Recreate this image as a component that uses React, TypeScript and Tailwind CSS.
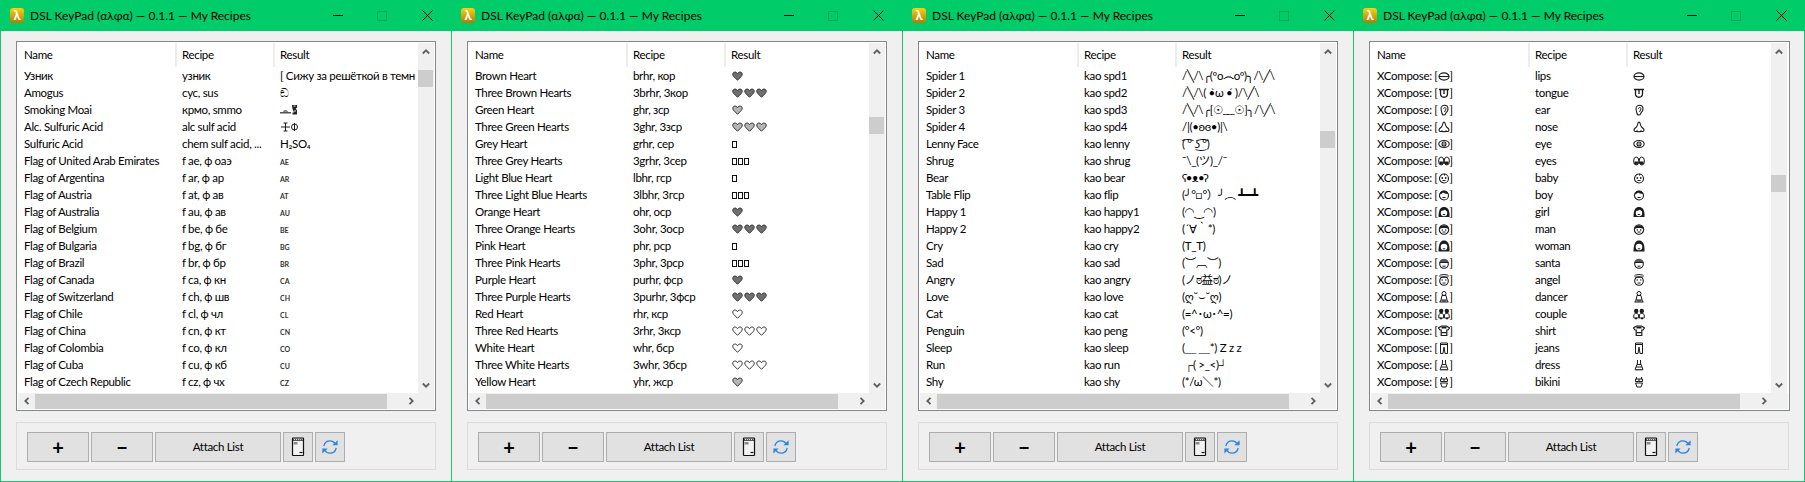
import React, { ReactNode } from "react";

const Svg = ({ w = 12, h = 12, children, className = "" }: { w?: number; h?: number; children: ReactNode; className?: string }) => (
  <svg width={w} height={h} viewBox={`0 0 ${w} ${h}`} className={`inline-block align-[-2px] shrink-0 ${className}`} fill="none">
    {children}
  </svg>
);

const HEART = "M5.500 10.300 1.500 6.200C.4 4.900.6 3 1.800 2.300 3.200 1.600 4.600 2.200 5.500 3.700 6.400 2.200 7.800 1.600 9.200 2.300 10.400 3 10.600 4.900 9.500 6.200Z";
const Heart = ({ fill }: { fill: string }) => (
  <Svg>
    <path d={HEART} fill={fill} stroke="#3a3a3a" strokeWidth="1" />
  </Svg>
);
const Hearts = ({ fill, n = 1 }: { fill: string; n?: number }) => (
  <span className="inline-flex h-[17px] items-center pl-px">
    {Array.from({ length: n }).map((_, i) => (
      <Heart key={i} fill={fill} />
    ))}
  </span>
);
const Tofu = ({ n = 1 }: { n?: number }) => (
  <span className="inline-flex h-[17px] items-center gap-[1px] pb-[2px] pl-px">
    {Array.from({ length: n }).map((_, i) => (
      <span key={i} className="block h-[7px] w-[5px] border border-[#111] bg-white" />
    ))}
  </span>
);
const Flag = ({ c }: { c: string }) => <span className="text-[7px] font-bold tracking-normal text-[#333]">{c}</span>;

const S = "#1c1c1c";
const emoji: Record<string, ReactNode> = {
  lips: (<><ellipse cx="6" cy="6.500" rx="5" ry="3.600" stroke={S} strokeWidth="1.100" /><path d="M1 6.500h10" stroke={S} strokeWidth="1.100" /></>),
  tongue: (<><path d="M1 2.500h10M2.500 2.500v4c0 5 7 5 7 0v-4M6 3v4" stroke={S} strokeWidth="1.300" /></>),
  ear: (<><path d="M3 5c0-5 7-5 7 0 0 3-2 3-2.500 5-.5 1.500-3 1.500-3.500-.5Z" stroke={S} strokeWidth="1.100" /><path d="M5.500 5c0-2 2.500-2 2.500 0l-1.500 3" stroke={S} /></>),
  nose: (<><path d="M6 1C4.500 1 5 4 3.500 6 2.500 7 1 7.500 1 9s2 2 3 1c1 1 3 1 4 0 1 1 3 .5 3-1S9.500 7 8.500 6C7 4 7.500 1 6 1Z" stroke={S} strokeWidth="1.100" /></>),
  eye: (<><ellipse cx="6" cy="6" rx="5.200" ry="3.500" stroke={S} strokeWidth="1.100" /><circle cx="6" cy="6" r="2" stroke={S} strokeWidth="1.100" /><circle cx="6" cy="6" r=".8" fill={S} /></>),
  eyes: (<><ellipse cx="3.200" cy="6" rx="2.600" ry="4" stroke={S} /><ellipse cx="8.800" cy="6" rx="2.600" ry="4" stroke={S} /><path d="M1.500 6.500h3.400v3H1.500zM7 6.500h3.500v3H7z" fill={S} /></>),
  baby: (<><circle cx="6" cy="6.500" r="4.500" stroke={S} strokeWidth="1.100" /><path d="M6 3.500c1 0 1-1.500 0-1.500" stroke={S} /><circle cx="4.300" cy="6" r=".9" fill={S} /><circle cx="7.700" cy="6" r=".9" fill={S} /><path d="M4.500 8.500h3" stroke={S} /></>),
  boy: (<><circle cx="6" cy="6.500" r="4.500" stroke={S} strokeWidth="1.100" /><path d="M1.500 5.500C2 1 9 .5 10.500 5 8 5.200 6 4 5 3.500 4.500 4.500 3 5 1.500 5.500Z" fill={S} /><path d="M4.500 8.500h3" stroke={S} /></>),
  girl: (<><path d="M.5 11C.500 3 3 1 6 1s6 2 5.500 10Z" fill={S} /><circle cx="6" cy="7" r="3.200" fill="#fff" /><path d="M3 5c2 0 3-1 3.500-2 1 1 2 2 3 2.500L9 3 5 2Z" fill={S} /><path d="M4.800 8.500h2.400" stroke={S} /></>),
  man: (<><circle cx="6" cy="6.500" r="4.700" stroke={S} strokeWidth="1.100" /><path d="M1.500 6C1.500 1 10.500 1 10.500 6 9 4.500 3 4.500 1.500 6Z" fill={S} /><circle cx="4.300" cy="7" r=".8" fill={S} /><circle cx="7.700" cy="7" r=".8" fill={S} /><path d="M4.500 9h3" stroke={S} /></>),
  woman: (<><path d="M.5 11.500C.500 3 3 .5 6 .5s6 2.500 5.500 11Z" fill={S} /><circle cx="6" cy="7" r="3.300" fill="#fff" /><path d="M4.800 8.800h2.400" stroke={S} /></>),
  santa: (<><circle cx="6" cy="7" r="4.300" stroke={S} strokeWidth="1.100" /><path d="M1.500 5.500C2 .5 9.500.5 10.500 5.500Z" fill="#555" /><path d="M1.500 5.500h9" stroke={S} /><path d="M4.500 9.200h3" stroke={S} /></>),
  angel: (<><ellipse cx="6" cy="2" rx="4.500" ry="1.400" stroke={S} /><circle cx="6" cy="7" r="4.300" stroke={S} strokeWidth="1.100" /><path d="M3.500 6h1.500M7 6h1.500M4.500 9h3" stroke={S} /></>),
  dancer: (<><circle cx="6" cy="2.500" r="2" stroke={S} /><path d="M4 4.500 3 9h6L8 4.500ZM1.500 11h9M3 9l-1 2M9 9l1 2M5 9v2M7 9v2" stroke={S} /></>),
  couple: (<><circle cx="3.200" cy="3" r="2.200" fill={S} /><circle cx="8.800" cy="3" r="2.200" fill={S} /><path d="M.8 10V7c0-2 4.800-2 4.800 0v3ZM6.400 10V7c0-2 4.800-2 4.800 0v3Z" stroke={S} /><path d="M2 10.500h2M8 10.500h2" stroke={S} strokeWidth="1.500" /></>),
  shirt: (<><path d="M3.500 1h5l3 2-1.500 2H8.800v5.500H3.200V5H2L.5 3Z" stroke={S} strokeWidth="1.200" /><path d="M3.500 1.500h5v2h-5zM3.500 7h5v1.200h-5z" fill={S} /></>),
  jeans: (<><path d="M2.500 1h7v10.500H7L6 5l-1 6.500H2.500Z" stroke={S} /><path d="M2.500 2.500h7" stroke={S} /></>),
  dress: (<><path d="M4.500 1v3l-.5 1.500L2 10.500h8L8 5.500 7.500 4V1M4 5.500h4M3 8h6" stroke={S} /><path d="M2 11h8" stroke="#666" /></>),
  bikini: (<><path d="M3.500 1v2M8.500 1v2M2.500 3h7v2.500h-7ZM2.500 7h7L8 11H4Z" stroke={S} /><path d="M6 3v2.500" stroke={S} /></>),
};
const Emoji = ({ k }: { k: string }) => <Svg>{emoji[k]}</Svg>;

const Moai = () => (
  <span className="inline-flex items-center h-[17px]">
    <Svg w={11} h={12}>
      <path d="M0 8h11v1.500H0Z" fill="#555" />
      <path d="M3 8c0-1.500 1.500-2 2.500-2S8 6.500 8 8Z" fill="#888" />
    </Svg>
    <Svg w={7} h={12}>
      <path d="M1 1h5v2.500L4.500 5l1.500 1v4.500H1.500V8.500H3L1.500 5Z" fill="#222" />
      <path d="M2.500 2h2M3 7h2" stroke="#ddd" />
    </Svg>
  </span>
);
const Acid = () => (
  <span className="inline-flex items-center h-[17px]">
    <Svg w={11} h={12}>
      <path d="M5.500 2v8M1 6h9M3.500 2h4M3.500 10h4" stroke={S} />
    </Svg>
    <Svg w={7} h={12}>
      <circle cx="3.500" cy="6" r="3" stroke={S} />
      <path d="M3.500 2v8" stroke={S} />
    </Svg>
  </span>
);

type Row = [ReactNode, string, ReactNode];

const flags: [string, string, string, string][] = [
  ["United Arab Emirates", "ae", "оаэ", "AE"],
  ["Argentina", "ar", "ар", "AR"],
  ["Austria", "at", "ав", "AT"],
  ["Australia", "au", "ав", "AU"],
  ["Belgium", "be", "бе", "BE"],
  ["Bulgaria", "bg", "бг", "BG"],
  ["Brazil", "br", "бр", "BR"],
  ["Canada", "ca", "кн", "CA"],
  ["Switzerland", "ch", "шв", "CH"],
  ["Chile", "cl", "чл", "CL"],
  ["China", "cn", "кт", "CN"],
  ["Colombia", "co", "кл", "CO"],
  ["Cuba", "cu", "кб", "CU"],
  ["Czech Republic", "cz", "чх", "CZ"],
];

const list1: Row[] = [
  ["Узник", "узник", "[ Сижу за решёткой в темн"],
  ["Amogus", "сус, sus", "ඞ"],
  ["Smoking Moai", "крмо, smmo", <Moai />],
  ["Alc. Sulfuric Acid", "alc sulf acid", <Acid />],
  ["Sulfuric Acid", "chem sulf acid, ...", "H₂SO₄"],
  ...flags.map(([n, a, b, c]): Row => [`Flag of ${n}`, `f ${a}, ф ${b}`, <Flag c={c} />]),
];

const DARK = "#6f6f6f";
const LIGHT = "#b5b5b5";
const list2: Row[] = [
  ["Brown Heart", "brhr, кор", <Hearts fill={DARK} />],
  ["Three Brown Hearts", "3brhr, 3кор", <Hearts fill={DARK} n={3} />],
  ["Green Heart", "ghr, зср", <Hearts fill={LIGHT} />],
  ["Three Green Hearts", "3ghr, 3зср", <Hearts fill={LIGHT} n={3} />],
  ["Grey Heart", "grhr, сер", <Tofu />],
  ["Three Grey Hearts", "3grhr, 3сер", <Tofu n={3} />],
  ["Light Blue Heart", "lbhr, гср", <Tofu />],
  ["Three Light Blue Hearts", "3lbhr, 3гср", <Tofu n={3} />],
  ["Orange Heart", "ohr, оср", <Hearts fill={DARK} />],
  ["Three Orange Hearts", "3ohr, 3оср", <Hearts fill={DARK} n={3} />],
  ["Pink Heart", "phr, рср", <Tofu />],
  ["Three Pink Hearts", "3phr, 3рср", <Tofu n={3} />],
  ["Purple Heart", "purhr, фср", <Hearts fill={DARK} />],
  ["Three Purple Hearts", "3purhr, 3фср", <Hearts fill={DARK} n={3} />],
  ["Red Heart", "rhr, кср", <Hearts fill="#fff" />],
  ["Three Red Hearts", "3rhr, 3кср", <Hearts fill="#fff" n={3} />],
  ["White Heart", "whr, бср", <Hearts fill="#fff" />],
  ["Three White Hearts", "3whr, 3бср", <Hearts fill="#fff" n={3} />],
  ["Yellow Heart", "yhr, жср", <Hearts fill={LIGHT} />],
];

const list3: Row[] = [
  ["Spider 1", "kao spd1", "/╲/\\╭(ºo෴oº)╮/\\╱\\"],
  ["Spider 2", "kao spd2", "/╲/\\( •̀ω •́ )/\\╱\\"],
  ["Spider 3", "kao spd3", "/╲/\\╭[☉﹏☉]╮/\\╱\\"],
  ["Spider 4", "kao spd4", "/|(•ʚɞ•)|\\"],
  ["Lenny Face", "kao lenny", "( ͡° ͜ʖ ͡°)"],
  ["Shrug", "kao shrug", "¯\\_(ツ)_/¯"],
  ["Bear", "kao bear", "ʕ•ᴥ•ʔ"],
  ["Table Flip", "kao flip", "(╯°□°）╯︵ ┻━┻"],
  ["Happy 1", "kao happy1", "(◠‿◠)"],
  ["Happy 2", "kao happy2", "(´∀｀*)"],
  ["Cry", "kao cry", "(T_T)"],
  ["Sad", "kao sad", "(︶︹︶)"],
  ["Angry", "kao angry", "(ノಠ益ಠ)ノ"],
  ["Love", "kao love", "(ღ˘⌣˘ღ)"],
  ["Cat", "kao cat", "(=^･ω･^=)"],
  ["Penguin", "kao peng", "(°<°)"],
  ["Sleep", "kao sleep", "(＿ ＿*) Z z z"],
  ["Run", "kao run", " ┌( >_<)┘"],
  ["Shy", "kao shy", "(*/ω＼*)"],
];

const list4: Row[] = Object.keys(emoji).map((k): Row => [
  <>
    XCompose: [<Emoji k={k} />]
  </>,
  k,
  <Emoji k={k} />,
]);

const Chevron = ({ d }: { d: string }) => (
  <svg width="8" height="8" viewBox="0 0 8 8" fill="none" className="block">
    <path d={d} stroke="#606060" strokeWidth="1.800" />
  </svg>
);

const PhoneIcon = () => (
  <svg width="14" height="20" viewBox="0 0 14 20" fill="none">
    <rect x="1.500" y="1" width="11" height="17.500" rx=".5" fill="#f2f2f2" stroke="#111" strokeWidth="1.200" />
    <path d="M2 1.500h10V4H2Z" fill="#555" />
    <path d="M3 2.500h1M5 2.500h1M7 2.500h1M9 2.500h1M11 2.500h.5" stroke="#ddd" />
    <path d="M2.500 5h4v2.500h-4Z" fill="#8a8a8a" />
    <path d="M8.500 15.500h3" stroke="#111" strokeWidth="1.200" />
  </svg>
);

const SyncIcon = () => (
  <svg width="16" height="16" viewBox="0 0 16 16" fill="none">
    <path d="M1.800 7C2.500 3.800 5 1.800 8 1.800c2.300 0 4 1 5 2.900" stroke="#2b87dd" strokeWidth="1.300" />
    <path d="M10.400 6.300h5.200V1.200Z" fill="#2b87dd" />
    <path d="M14.200 9c-.7 3.200-3.200 5.200-6.200 5.200-2.300 0-4-1-5-2.900" stroke="#2b87dd" strokeWidth="1.300" />
    <path d="M5.600 9.400H.4v5.100Z" fill="#2b87dd" />
  </svg>
);

const Btn = ({ className, children }: { className: string; children: ReactNode }) => (
  <div className={`flex h-[30px] items-center justify-center border border-[#adadad] bg-[#e1e1e1] ${className}`}>{children}</div>
);

const Window = ({ rows, thumb, last }: { rows: Row[]; thumb: number; last?: boolean }) => (
  <div className={`flex h-[482px] shrink-0 flex-col bg-[#f0f0f0] ${last ? "w-[452px]" : "w-[451px]"}`}>
    <div className="flex h-[31px] shrink-0 items-center bg-[#00cc6a]">
      <div className="ml-[10px] flex h-[15px] w-[14px] items-center justify-center rounded-[3px] bg-linear-to-b from-[#f8d21c] to-[#a97f08] text-[13px] font-bold leading-none text-white">
        λ
      </div>
      <span className="ml-[6px] whitespace-nowrap text-[12px] tracking-normal text-black">DSL KeyPad (αλφα) — 0.1.1 — My Recipes</span>
      <svg width="10" height="1" className="ml-auto block">
        <path d="M0 .5h10" stroke="#000" />
      </svg>
      <svg width="10" height="10" className="ml-[34px] block">
        <rect x=".5" y=".5" width="9" height="9" stroke="#00a555" fill="none" />
      </svg>
      <svg width="11" height="11" className="ml-[35px] mr-[18px] block">
        <path d="M.5.5l10 10M10.500.5l-10 10" stroke="#000" />
      </svg>
    </div>
    <div className={`flex flex-1 flex-col border-l border-b border-[#1fc274] pl-[15px] ${last ? "border-r pr-[14px]" : "pr-[15px]"}`}>
      <div className="mt-[10px] flex h-[370px] flex-col border border-[#82878c] bg-white p-px">
        <div className="flex h-[350px]">
          <div className="w-[400px] overflow-hidden">
            <div className="grid h-[24px] grid-cols-[157px_98px_145px] items-center">
              <span className="pb-[1px] pl-[6px]">Name</span>
              <span className="h-[24px] border-l-2 border-[#ececec] pl-[5px] leading-[23px]">Recipe</span>
              <span className="h-[24px] border-l-2 border-[#ececec] pl-[5px] leading-[23px]">Result</span>
            </div>
            {rows.map((r, i) => (
              <div key={i} className="grid h-[17px] grid-cols-[157px_98px_145px] leading-[17px]">
                <span className="overflow-hidden whitespace-nowrap pl-[6px]">{r[0]}</span>
                <span className="overflow-hidden whitespace-pre pl-[7px]">{r[1]}</span>
                <span className="overflow-hidden whitespace-pre pl-[7px]">{r[2]}</span>
              </div>
            ))}
          </div>
          <div className="flex w-[16px] flex-col bg-[#f0f0f0]">
            <div className="flex h-[17px] items-center justify-center pt-[1px] pr-[1px]">
              <Chevron d="M.8 5.500 4 2.300 7.200 5.500" />
            </div>
            <div className="flex-1">
              <div className="mr-[1px] h-[17px] bg-[#cdcdcd]" style={{ marginTop: thumb - 60 }} />
            </div>
            <div className="flex h-[17px] items-center justify-center pr-[1px]">
              <Chevron d="M.8 2.500 4 5.700 7.200 2.500" />
            </div>
          </div>
        </div>
        <div className="flex h-[16px] items-center bg-[#f0f0f0]">
          <div className="flex w-[17px] justify-center">
            <Chevron d="M5.500.8 2.300 4 5.500 7.200" />
          </div>
          <div className="h-[15px] w-[352px] bg-[#cdcdcd]" />
          <div className="flex w-[47px] justify-center">
            <Chevron d="M2.500.8 5.700 4 2.500 7.200" />
          </div>
        </div>
      </div>
      <div className="mt-[11px] flex h-[48px] w-[420px] items-start gap-[2px] border border-[#dcdcdc] pl-[10px] pt-[9px]">
        <Btn className="w-[62px]">
          <span className="text-[20px] font-bold leading-none">+</span>
        </Btn>
        <Btn className="w-[62px]">
          <span className="text-[20px] font-bold leading-none">−</span>
        </Btn>
        <Btn className="w-[126px]">Attach List</Btn>
        <Btn className="w-[30px]">
          <PhoneIcon />
        </Btn>
        <Btn className="w-[30px]">
          <SyncIcon />
        </Btn>
      </div>
    </div>
  </div>
);

export default function App() {
  return (
    <div className="flex h-[482px] w-[1805px] overflow-hidden bg-[#f0f0f0] font-['Lato','Open_Sans','DejaVu_Sans','Noto_Sans_CJK_JP',sans-serif] text-[11.5px] tracking-[-0.32px] text-black">
      <Window rows={list1} thumb={70} />
      <Window rows={list2} thumb={117} />
      <Window rows={list3} thumb={131} />
      <Window rows={list4} thumb={175} last />
    </div>
  );
}
